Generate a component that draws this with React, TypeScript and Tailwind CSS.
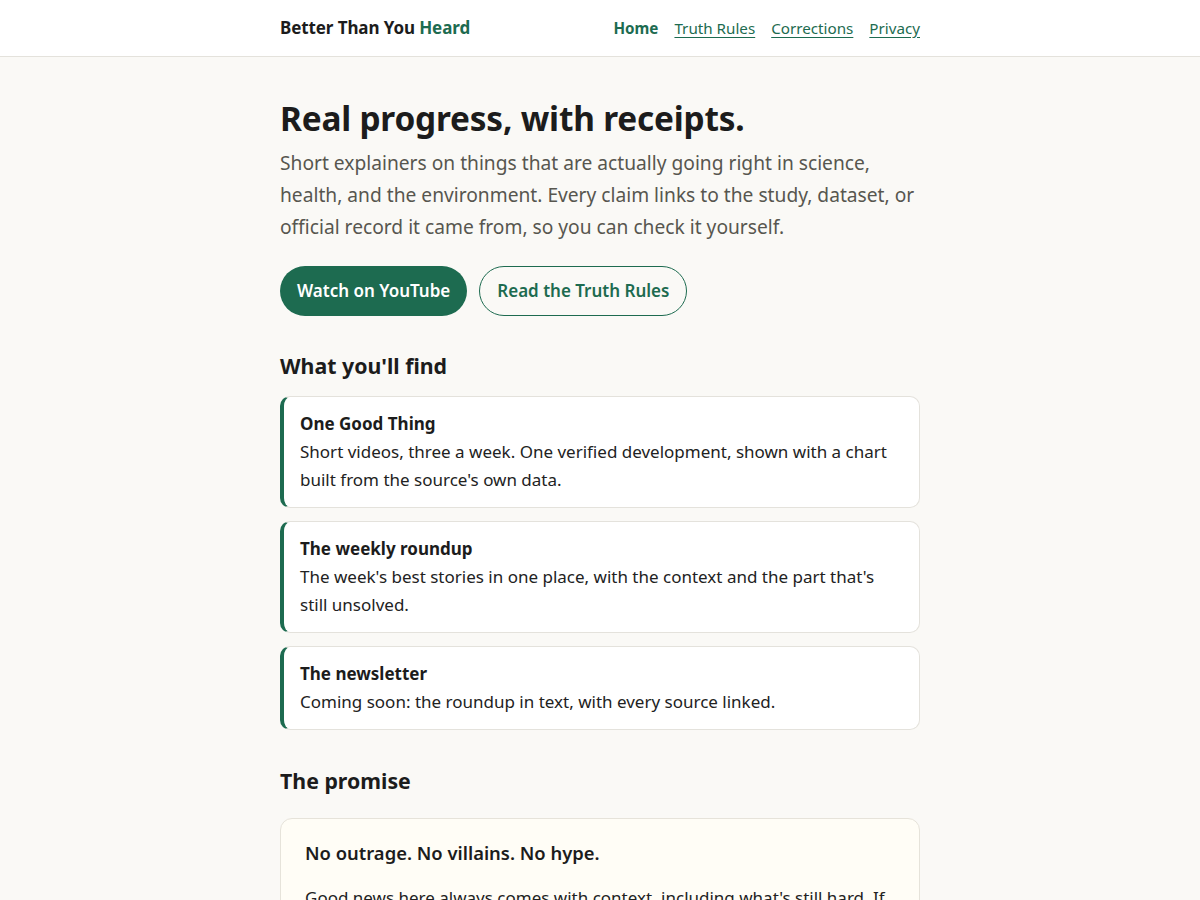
export default function App() {
  const font = { fontFamily: '"Noto Sans", "Open Sans", sans-serif' };
  const cards = [
    {
      t: "One Good Thing",
      d: "Short videos, three a week. One verified development, shown with a chart built from the source's own data.",
    },
    {
      t: "The weekly roundup",
      d: "The week's best stories in one place, with the context and the part that's still unsolved.",
    },
    {
      t: "The newsletter",
      d: "Coming soon: the roundup in text, with every source linked.",
    },
  ];
  return (
    <div className="min-h-screen bg-[#faf9f6] text-[#1c1c1c]" style={font}>
      <header className="h-[57px] bg-white border-b border-[#e4e2dc]">
        <div className="mx-auto w-[640px] h-14 flex items-center justify-between">
          <div className="text-[17px] font-bold tracking-[-0.1px]">
            Better Than You <span className="text-[#1d6b50]">Heard</span>
          </div>
          <nav className="flex items-center gap-4 text-[15.2px] text-[#1d6b50]">
            <a className="font-bold">Home</a>
            <a className="underline underline-offset-[3px]">Truth Rules</a>
            <a className="underline underline-offset-[3px]">Corrections</a>
            <a className="underline underline-offset-[3px]">Privacy</a>
          </nav>
        </div>
      </header>
      <main className="mx-auto w-[640px] pt-[41px] pb-10">
        <h1 className="text-[33.4px] leading-[40px] font-bold tracking-[-0.2px]">
          Real progress, with receipts.
        </h1>
        <p className="mt-[9px] text-[19.2px] leading-[32px] text-[#57564f]">
          Short explainers on things that are actually going right in science,
          health, and the environment. Every claim links to the study, dataset,
          or official record it came from, so you can check it yourself.
        </p>
        <div className="mt-[23px] flex gap-3">
          <a className="h-[50px] px-[17px] rounded-full bg-[#1d6b50] text-white text-[17px] font-semibold flex items-center">
            Watch on YouTube
          </a>
          <a className="h-[50px] px-[17px] rounded-full border border-[#1d6b50] text-[#1d6b50] text-[17px] font-semibold flex items-center">
            Read the Truth Rules
          </a>
        </div>
        <h2 className="mt-9 text-[21.3px] leading-[28px] font-bold">What you'll find</h2>
        <div className="mt-[16px] flex flex-col gap-[13px]">
          {cards.map((c) => (
            <div
              key={c.t}
              className="bg-white border border-[#e4e2dc] border-l-4 border-l-[#1d6b50] rounded-[10px] pl-4 pr-5 pt-[13px] pb-[13px]"
            >
              <div className="text-[17px] leading-[28px] font-bold">{c.t}</div>
              <div className="text-[17px] leading-[28px] text-[#222]">{c.d}</div>
            </div>
          ))}
        </div>
        <h2 className="mt-[37px] text-[21.3px] leading-[28px] font-bold">The promise</h2>
        <div className="mt-[23px] bg-[#fffdf6] border border-[#e6e3da] rounded-xl px-6 pt-[20px] pb-6">
          <div className="text-[18.4px] leading-[28px] font-semibold">
            No outrage. No villains. No hype.
          </div>
          <p className="mt-[17px] text-[17px] leading-[28px] text-[#222]">
            Good news here always comes with context, including what's still hard. If
            we get something wrong, we fix it in public and log the correction.
          </p>
        </div>
      </main>
    </div>
  );
}
